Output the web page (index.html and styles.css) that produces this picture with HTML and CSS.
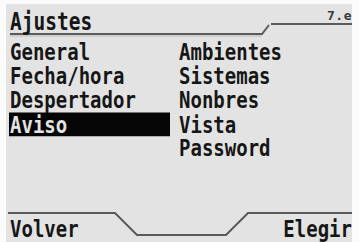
FILE: index.html
```html
<!DOCTYPE html>
<html>
<head>
<meta charset="utf-8">
<link rel="stylesheet" href="styles.css">
</head>
<body>
<div class="screen">
  <div class="header">
    <svg class="deco" width="346" height="36" viewBox="0 0 346 36">
      <polyline points="4,30 256,30 263,21" fill="none" stroke="#5a5a5a" stroke-width="2"/>
      <polyline points="265,20 346,20" fill="none" stroke="#5a5a5a" stroke-width="2"/>
      <line x1="4" y1="32" x2="256" y2="32" stroke="#b8b8b8" stroke-width="1"/>
    </svg>
    <span class="title">Ajustes</span>
    <span class="version">7.e</span>
  </div>
  <div class="menu">
    <div class="col">
      <div class="item">General</div>
      <div class="item">Fecha/hora</div>
      <div class="item">Despertador</div>
      <div class="item selected">Aviso</div>
    </div>
    <div class="col">
      <div class="item">Ambientes</div>
      <div class="item">Sistemas</div>
      <div class="item">Nonbres</div>
      <div class="item">Vista</div>
      <div class="item">Password</div>
    </div>
  </div>
  <div class="footer">
    <svg class="deco" width="346" height="32" viewBox="0 0 346 32">
      <polyline points="2,3 109,3 131,25 220,25 242,3 346,3" fill="none" stroke="#5a5a5a" stroke-width="2"/>
    </svg>
    <div class="keys">
      <span class="key">Volver</span>
      <span class="key">Elegir</span>
    </div>
  </div>
</div>
</body>
</html>
```

FILE: styles.css
```css
html, body {
  margin: 0;
  padding: 0;
  background: #fbfbfb;
}
body {
  width: 359px;
  height: 242px;
  overflow: hidden;
}
.screen {
  margin: 4px 7px 0 6px;
  width: 346px;
  height: 238px;
  background: #e3e3e3;
  display: flex;
  flex-direction: column;
  font-family: "DejaVu Sans Mono", monospace;
  font-weight: bold;
  color: #161616;
}
.header {
  display: grid;
  height: 36px;
}
.header > * {
  grid-area: 1 / 1;
}
.deco {
  display: block;
}
.title {
  align-self: start;
  justify-self: start;
  margin: 6px 0 0 4px;
  font-size: 19.5px;
  line-height: 19.2px;
  transform: scaleY(1.27);
  transform-origin: top left;
}
.version {
  align-self: start;
  justify-self: end;
  margin-top: 6px;
  font-size: 13px;
  line-height: 12px;
  letter-spacing: 0.5px;
  color: #3a3a3a;
}
.menu {
  display: grid;
  grid-template-columns: 161px 1fr;
  gap: 0 8px;
  padding-left: 3px;
  transform: scaleY(1.25);
  transform-origin: top left;
  font-size: 19px;
  line-height: 19.2px;
}
.item {
  height: 19.2px;
  padding-left: 1px;
  white-space: nowrap;
}
.item.selected {
  background: #050505;
  color: #e3e3e3;
}
.footer {
  margin-top: auto;
  height: 32px;
  display: grid;
}
.footer > * {
  grid-area: 1 / 1;
}
.keys {
  display: flex;
  justify-content: space-between;
  padding: 7px 0 0 4px;
  font-size: 19px;
  line-height: 19.2px;
}
.key {
  display: inline-block;
  transform: scaleY(1.25);
  transform-origin: top left;
  height: 19.2px;
}
```
